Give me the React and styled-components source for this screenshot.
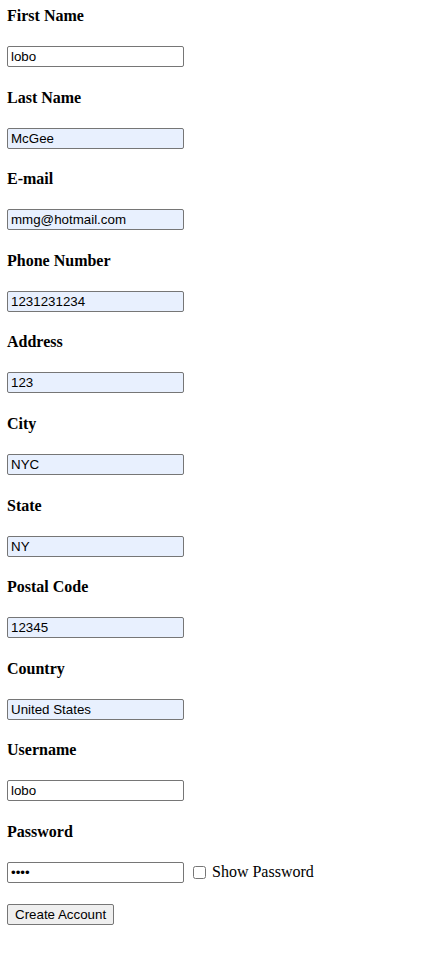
import styled, { createGlobalStyle } from "styled-components";

const Global = createGlobalStyle`
  body {
    margin: 7px 8px 8px 7px;
    background: #fff;
    font-family: "Liberation Serif", "Times New Roman", serif;
    font-size: 16px;
    color: #000;
  }
`;

const Form = styled.form`
  display: flex;
  flex-direction: column;
  align-items: flex-start;
`;

const Field = styled.div`
  display: flex;
  flex-direction: column;
  align-items: flex-start;
  margin-bottom: ${(p) => (p.$last ? "20.6px" : "21.6px")};
`;

const Label = styled.label`
  display: block;
  font-weight: bold;
  font-size: 16px;
  line-height: 18.4px;
  margin-bottom: 20.6px;
`;

const Input = styled.input`
  box-sizing: border-box;
  width: 177px;
  height: 21px;
  margin: 0;
  padding: 1px 3px;
  border: 1px solid #767676;
  border-radius: 2px;
  font-family: "Liberation Sans", Arial, sans-serif;
  font-size: 13.33px;
  color: #000;
  background: ${(p) => (p.$filled ? "#e8f0fe" : "#fff")};
  outline: none;
`;

const Row = styled.div`
  display: flex;
  align-items: center;
`;

const Check = styled.input`
  width: 13px;
  height: 13px;
  margin: 0 6px 0 9px;
`;

const CheckText = styled.span`
  font-size: 16px;
`;

const Button = styled.button`
  box-sizing: border-box;
  height: 21px;
  padding: 1px 7px;
  border: 1px solid #767676;
  border-radius: 2px;
  background: #efefef;
  font-family: "Liberation Sans", Arial, sans-serif;
  font-size: 13.33px;
  color: #000;
`;

const fields = [
  ["First Name", "lobo", false],
  ["Last Name", "McGee", true],
  ["E-mail", "mmg@hotmail.com", true],
  ["Phone Number", "1231231234", true],
  ["Address", "123", true],
  ["City", "NYC", true],
  ["State", "NY", true],
  ["Postal Code", "12345", true],
  ["Country", "United States", true],
  ["Username", "lobo", false],
];

export default function App() {
  return (
    <>
      <Global />
      <Form onSubmit={(e) => e.preventDefault()}>
        {fields.map(([label, value, filled]) => (
          <Field key={label}>
            <Label>{label}</Label>
            <Input defaultValue={value} $filled={filled} />
          </Field>
        ))}
        <Field $last>
          <Label>Password</Label>
          <Row>
            <Input type="password" defaultValue="lobo" />
            <Check type="checkbox" />
            <CheckText>Show Password</CheckText>
          </Row>
        </Field>
        <Button type="submit">Create Account</Button>
      </Form>
    </>
  );
}
